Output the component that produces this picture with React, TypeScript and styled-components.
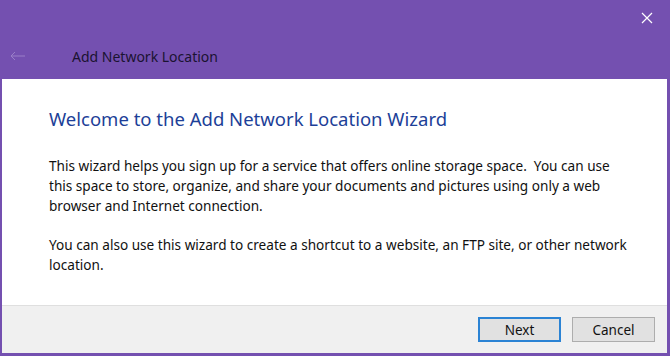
import React from 'react';
import styled, { createGlobalStyle } from 'styled-components';

const GlobalStyle = createGlobalStyle`
  html, body {
    margin: 0;
    padding: 0;
    width: 670px;
    height: 356px;
    overflow: hidden;
    background: #7450b0;
  }
  #root {
    height: 100%;
  }
`;

const Window = styled.div`
  box-sizing: border-box;
  width: 670px;
  height: 356px;
  display: flex;
  flex-direction: column;
  background: #7450b0;
  border-left: 2px solid #7450b0;
  border-right: 3px solid #7450b0;
  border-bottom: 3px solid #7450b0;
  font-family: 'Noto Sans', 'Open Sans', sans-serif;
`;

const TitleBar = styled.div`
  height: 79px;
  display: flex;
  flex-direction: column;
  background: #7450b0;
`;

const TopRow = styled.div`
  height: 36px;
  display: flex;
  justify-content: flex-end;
  align-items: center;
`;

const CloseButton = styled.div`
  width: 46px;
  height: 36px;
  display: flex;
  align-items: center;
  justify-content: center;
  margin-right: -3px;
`;

const NavRow = styled.div`
  display: flex;
  align-items: center;
  height: 40px;
`;

const BackArrow = styled.div`
  width: 46px;
  padding-left: 8px;
  display: flex;
  align-items: center;
`;

const WindowTitle = styled.div`
  margin-left: 16px;
  font-size: 14px;
  color: #1b1330;
`;

const Content = styled.div`
  flex: 1;
  background: #ffffff;
  padding: 27px 20px 0 47px;
`;

const Heading = styled.h1`
  margin: 0 0 24px 0;
  font-weight: normal;
  font-size: 18.5px;
  line-height: 26px;
  color: #1d3f98;
`;

const Paragraph = styled.p`
  margin: 0 0 19px 0;
  font-size: 13.6px;
  line-height: 20px;
  color: #111;
  white-space: pre-wrap;
`;

const Footer = styled.div`
  height: 48px;
  box-sizing: border-box;
  background: #f0f0f0;
  border-top: 1px solid #dfdfdf;
  display: flex;
  justify-content: flex-end;
  align-items: center;
  gap: 11px;
  padding-right: 12px;
`;

const Button = styled.button<{ $primary?: boolean }>`
  box-sizing: border-box;
  width: 83px;
  height: 25px;
  background: #e1e1e1;
  border: ${(p) => (p.$primary ? '2px solid #2b83d4' : '1px solid #adadad')};
  font-family: 'Noto Sans', 'Open Sans', sans-serif;
  font-size: 13.5px;
  color: #111;
  padding: 0;
`;

export default function App() {
  return (
    <>
      <GlobalStyle />
      <Window>
        <TitleBar>
          <TopRow>
            <CloseButton>
              <svg width="12" height="12" viewBox="0 0 12 12">
                <path d="M1 1L11 11M11 1L1 11" stroke="#ffffff" strokeWidth="1.2" />
              </svg>
            </CloseButton>
          </TopRow>
          <NavRow>
            <BackArrow>
              <svg width="16" height="10" viewBox="0 0 16 10">
                <path d="M1 5H15M1 5L5 1M1 5L5 9" stroke="#9a7fc8" strokeWidth="1" fill="none" />
              </svg>
            </BackArrow>
            <WindowTitle>Add Network Location</WindowTitle>
          </NavRow>
        </TitleBar>
        <Content>
          <Heading>Welcome to the Add Network Location Wizard</Heading>
          <Paragraph>
            {'This wizard helps you sign up for a service that offers online storage space.  You can use\nthis space to store, organize, and share your documents and pictures using only a web\nbrowser and Internet connection.'}
          </Paragraph>
          <Paragraph>
            {'You can also use this wizard to create a shortcut to a website, an FTP site, or other network\nlocation.'}
          </Paragraph>
        </Content>
        <Footer>
          <Button $primary>Next</Button>
          <Button>Cancel</Button>
        </Footer>
      </Window>
    </>
  );
}
